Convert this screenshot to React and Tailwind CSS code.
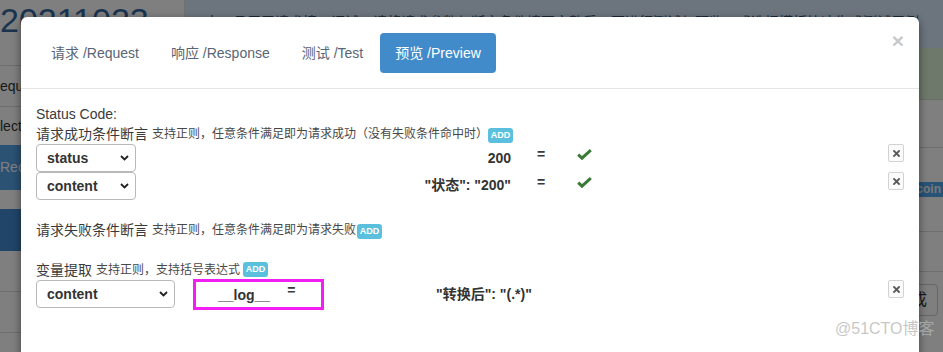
import React from "react";

const Chevron = () => (
  <svg width="9" height="6" viewBox="0 0 9 6" className="shrink-0">
    <path d="M1 1 L4.5 4.5 L8 1" fill="none" stroke="#222" strokeWidth="1.8" />
  </svg>
);

const Check = () => (
  <svg width="15" height="11" viewBox="0 0 15 11">
    <path d="M1.2 5.6 L5 9.2 L13.8 1.2" fill="none" stroke="#3a7a36" strokeWidth="3" strokeLinejoin="miter" />
  </svg>
);

const RemoveBtn = () => (
  <div className="ml-auto self-start w-[16px] h-[18px] border border-[#d2d2d2] rounded-[2px] bg-[#fbfbfb] flex items-center justify-center">
    <svg width="7" height="7" viewBox="0 0 7 7">
      <path d="M1 1 L6 6 M6 1 L1 6" stroke="#5a5a5a" strokeWidth="1.9" strokeLinecap="square" />
    </svg>
  </div>
);

const Add = ({ className = "" }) => (
  <span className={"w-[25px] h-[15px] bg-[#5bc0de] rounded-[3px] text-white text-[9px] font-bold leading-none flex items-center justify-center " + className}>
    ADD
  </span>
);

const Select = ({ w, label }) => (
  <div className={"h-[28px] border border-[#b9b9b9] rounded-[4px] bg-white flex items-center justify-between pl-[10px] pr-[6px] shrink-0 " + w}>
    <span className="font-bold text-[14px] text-[#333]">{label}</span>
    <Chevron />
  </div>
);

export default function App() {
  return (
    <div className="relative w-[943px] h-[352px] overflow-hidden bg-white font-['Liberation_Sans','Noto_Sans_CJK_SC',sans-serif]">
      {/* background page */}
      <div className="flex h-full">
        <aside className="w-[185px] shrink-0 bg-white flex flex-col border-r border-[#e0e0e0]">
          <div className="h-[66px] border-b border-[#dcdcdc] text-[34px] leading-none text-[#3468a0] pt-[3px]">20211023</div>
          <div className="h-[41px] border-b border-[#dcdcdc] flex items-center text-[14px] text-[#333]">equest List</div>
          <div className="h-[38px] flex items-center text-[14px] text-[#333]">lect Case</div>
          <div className="h-[45px] bg-[#56a2e6] text-white flex items-center text-[14px]">Record</div>
          <div className="h-[19px]" />
          <div className="h-[42px] bg-[#428ad0]" />
          <div className="h-[41px] border-b border-[#dcdcdc]" />
          <div className="h-[41px] border-b border-[#dcdcdc]" />
        </aside>
        <main className="flex-1 flex flex-col">
          <div className="h-[48px] bg-[#d9ebfc] pl-[20px] pt-[12px] text-[14px] leading-[20px] text-[#31506f] whitespace-nowrap overflow-hidden">
            本工具用于请求接口调试，请将请求参数与断言条件填写完整后，再进行测试与预览，或选择模板快速生成测试用例
          </div>
          <div className="h-[52px] bg-[#dcf2d6] border-b border-[#cfe3c6]" />
          <div className="h-[48px] border-b border-[#dcdcdc]" />
          <div className="h-[84px] flex items-center justify-end border-b border-[#dcdcdc]">
            <span className="h-[15px] bg-[#4ea6ee] text-[#f0f0f0] text-[12px] font-bold leading-[15px] pl-[3px] pr-[2px]">bitcoin</span>
          </div>
          <div className="h-[40px] border-b border-[#dcdcdc]" />
          <div className="flex justify-end pt-[12px] pr-[5px]">
            <div className="h-[32px] border border-[#cccccc] rounded-[4px] px-[10px] flex items-center text-[16px] text-[#333]">生成</div>
          </div>
        </main>
      </div>
      <div className="absolute inset-0 bg-black/50" />

      {/* modal */}
      <div className="absolute left-[21px] top-[17px] w-[898px] h-[400px] bg-white rounded-[6px] shadow-[0_3px_9px_rgba(0,0,0,0.5)]">
        <div className="flex items-start px-[15px] pt-[16px] pb-[15px] border-b border-[#e5e5e5]">
          <div className="flex gap-[2px] text-[14px] leading-[20px]">
            <div className="px-[15px] py-[10px] text-[#586574]">请求 /Request</div>
            <div className="px-[15px] py-[10px] text-[#586574]">响应 /Response</div>
            <div className="px-[15px] py-[10px] text-[#586574]">测试 /Test</div>
            <div className="px-[15px] py-[10px] rounded-[4px] bg-[#428bca] text-white">预览 /Preview</div>
          </div>
          <div className="ml-auto -mt-[3px] text-[21px] leading-[21px] font-bold text-[#c9c9c9]">×</div>
        </div>

        <div className="px-[15px] pt-[15px] text-[14px] leading-[20px] text-[#3a3a3a]">
          <div className="h-[20px]">Status Code:</div>
          <div className="flex items-center h-[20px]">
            <span>请求成功条件断言</span>
            <span className="ml-[4px] text-[12px] text-[#484848]">支持正则，任意条件满足即为请求成功（没有失败条件命中时）</span>
            <Add className="ml-[0px] mt-[2px]" />
          </div>

          <div className="flex items-center h-[28px]">
            <Select w="w-[100px]" label="status" />
            <div className="w-[375px] text-right font-bold text-[#333]">200</div>
            <div className="ml-[26px] pb-[9px] font-bold">=</div>
            <div className="ml-[32px] pb-[8px] flex"><Check /></div>
            <RemoveBtn />
          </div>
          <div className="flex items-center h-[28px]">
            <Select w="w-[100px]" label="content" />
            <div className="w-[375px] text-right font-bold text-[#333] pb-[2px]">"状态": "200"</div>
            <div className="ml-[26px] pb-[9px] font-bold">=</div>
            <div className="ml-[32px] pb-[8px] flex"><Check /></div>
            <RemoveBtn />
          </div>

          <div className="flex items-center h-[20px] mt-[20px]">
            <span>请求失败条件断言</span>
            <span className="ml-[4px] text-[12px] text-[#484848]">支持正则，任意条件满足即为请求失败</span>
            <Add className="ml-[1px] mt-[2px]" />
          </div>

          <div className="flex items-center h-[20px] mt-[20px]">
            <span>变量提取</span>
            <span className="ml-[4px] text-[12px] text-[#484848]">支持正则，支持括号表达式</span>
            <Add className="ml-[3px] mt-[-2px]" />
          </div>

          <div className="flex items-center h-[28px]">
            <Select w="w-[139px]" label="content" />
            <div className="ml-[18px] w-[131px] h-[31px] border-[3px] border-[#f21ff2] flex items-center pl-[22px]">
              <span className="font-bold text-[#333] pt-[2px]">__log__</span>
              <span className="ml-[17px] pb-[8px] font-bold">=</span>
            </div>
            <div className="ml-[112px] font-bold text-[#333]">"转换后": "(.*)"</div>
            <RemoveBtn />
          </div>
        </div>
      </div>

      <div className="absolute left-[835px] top-[318px] text-[16px] leading-[22px] text-[rgba(180,180,180,0.75)] whitespace-nowrap">
        @51CTO博客
      </div>
    </div>
  );
}
